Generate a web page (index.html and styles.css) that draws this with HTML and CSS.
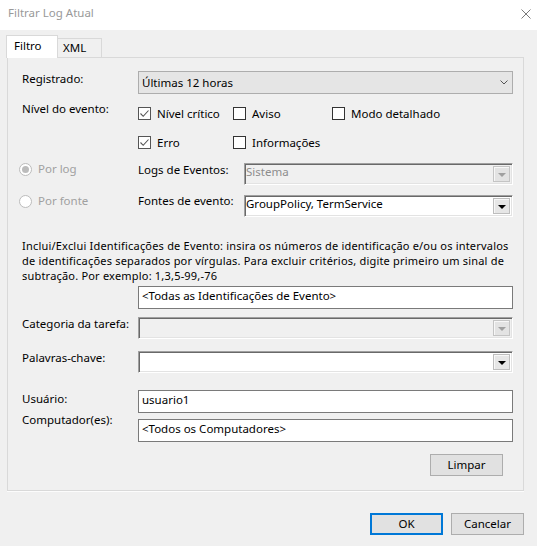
FILE: index.html
```html
<!DOCTYPE html>
<html lang="pt-BR">
<head>
<meta charset="utf-8">
<title>Filtrar Log Atual</title>
<link rel="stylesheet" href="styles.css">
</head>
<body>
<div class="titlebar">
  <span class="title">Filtrar Log Atual</span>
  <svg class="close" viewBox="0 0 10 10" width="10" height="10"><path d="M0.5 0.5L9.5 9.5M9.5 0.5L0.5 9.5" stroke="#7a7a7a" stroke-width="1" fill="none"/></svg>
</div>
<div class="tabs">
  <div class="tab active">Filtro</div>
  <div class="tab">XML</div>
</div>
<div class="panel">
  <div class="row row-reg">
    <div class="lbl">Registrado:</div>
    <div class="combo-themed">
      <span class="ctext">Últimas 12 horas</span>
      <svg class="chev" viewBox="0 0 8 5" width="8" height="5"><path d="M0.5 0.5L4 4L7.5 0.5" stroke="#555" stroke-width="1" fill="none"/></svg>
    </div>
  </div>

  <div class="row row-level">
    <div class="lbl lbl-level">Nível do evento:</div>
    <div class="checks">
      <div class="chk"><span class="box on"><svg viewBox="0 0 11 11" width="11" height="11"><path d="M1.5 5.5L4.2 8.3L9.5 2.5" stroke="#555" stroke-width="1.1" fill="none"/></svg></span>Nível crítico</div>
      <div class="chk"><span class="box"></span>Aviso</div>
      <div class="chk"><span class="box"></span>Modo detalhado</div>
      <div class="chk"><span class="box on"><svg viewBox="0 0 11 11" width="11" height="11"><path d="M1.5 5.5L4.2 8.3L9.5 2.5" stroke="#555" stroke-width="1.1" fill="none"/></svg></span>Erro</div>
      <div class="chk"><span class="box"></span>Informações</div>
    </div>
  </div>

  <div class="row row-logs">
    <div class="radio-col"><span class="radio on"></span>Por log</div>
    <div class="lbl2">Logs de Eventos:</div>
    <div class="combo3d disabled">
      <span class="ctext">Sistema</span>
      <span class="dropbtn"><span class="tri"></span></span>
    </div>
  </div>

  <div class="row row-src">
    <div class="radio-col"><span class="radio"></span>Por fonte</div>
    <div class="lbl2">Fontes de evento:</div>
    <div class="combo3d">
      <span class="ctext">GroupPolicy, TermService</span>
      <span class="dropbtn"><span class="tri"></span></span>
    </div>
  </div>

  <p class="para">Inclui/Exclui Identificações de Evento: insira os números de identificação e/ou os intervalos<br>de identificações separados por vírgulas. Para excluir critérios, digite primeiro um sinal de<br>subtração. Por exemplo: 1,3,5-99,-76</p>

  <div class="row row-ids">
    <div class="tb">&lt;Todas as Identificações de Evento&gt;</div>
  </div>

  <div class="row row-cat">
    <div class="lbl lbl-cat">Categoria da tarefa:</div>
    <div class="combo3d disabled">
      <span class="ctext"></span>
      <span class="dropbtn"><span class="tri"></span></span>
    </div>
  </div>

  <div class="row row-kw">
    <div class="lbl lbl-kw">Palavras-chave:</div>
    <div class="combo3d">
      <span class="ctext"></span>
      <span class="dropbtn"><span class="tri"></span></span>
    </div>
  </div>

  <div class="row row-user">
    <div class="lbl lbl-user">Usuário:</div>
    <div class="tb">usuario1</div>
  </div>

  <div class="row row-comp">
    <div class="lbl lbl-comp">Computador(es):</div>
    <div class="tb">&lt;Todos os Computadores&gt;</div>
  </div>

  <div class="row row-clear">
    <div class="btn">Limpar</div>
  </div>
</div>

<div class="footer">
  <div class="btn default">OK</div>
  <div class="btn">Cancelar</div>
</div>
</body>
</html>
```

FILE: styles.css
```css
* { box-sizing: border-box; }
html, body { margin: 0; padding: 0; }
body {
  width: 537px;
  height: 546px;
  overflow: hidden;
  background: #f0f0f0;
  font-family: "Noto Sans", "Open Sans", sans-serif;
  font-size: 11.5px;
  line-height: 16px;
  color: #000;
}

.titlebar {
  height: 30px;
  background: #fff;
  display: flex;
  justify-content: space-between;
  align-items: flex-start;
  padding: 5px 6px 0 8px;
}
.title { color: #999; }
.close { margin-top: 4px; display: block; }

.tabs {
  display: flex;
  align-items: flex-end;
  height: 22px;
  margin: 5px 0 0 6px;
  position: relative;
  z-index: 1;
}
.tab {
  height: 19px;
  border: 1px solid #d9d9d9;
  border-bottom: none;
  background: #f0f0f0;
  padding: 1px 0 0 5px;
  width: 45px;
  margin-left: -1px;
}
.tab.active {
  height: 23px;
  width: 52px;
  margin-left: 0;
  margin-bottom: -1px;
  background: #fff;
  padding: 2px 0 0 7px;
}

.panel {
  margin-left: 7px;
  width: 517px;
  height: 434px;
  border: 1px solid #d9d9d9;
  box-shadow: 0 1px 0 #fcfcfc;
  padding: 0 10px 0 14px;
  background: #f0f0f0;
}

.row { display: flex; align-items: flex-start; }
.lbl { width: 116px; flex: none; white-space: nowrap; }
.lbl2 { width: 106px; flex: none; white-space: nowrap; }

.row-reg { margin-top: 13px; }
.row-level { margin-top: 9px; }
.lbl-level { margin-top: -2px; }
.row-logs { margin-top: 10px; }
.row-logs .lbl2 { margin-top: -1.5px; }
.row-src { margin-top: 10px; }
.row-src .lbl2 { margin-top: -2.5px; }
.row-ids { margin-top: 3px; padding-left: 116px; }
.row-cat { margin-top: 8px; }
.lbl-cat { margin-top: -1.5px; }
.row-kw { margin-top: 12px; }
.lbl-kw { margin-top: -1.5px; }
.row-user { margin-top: 17px; }
.lbl-user { margin-top: 1px; }
.row-comp { margin-top: 6px; }
.lbl-comp { margin-top: -7px; }
.row-clear { margin-top: 12px; justify-content: flex-end; padding-right: 10px; }

.combo-themed {
  flex: 1;
  height: 23px;
  border: 1px solid #adadad;
  background: #e5e5e5;
  display: flex;
  align-items: center;
  justify-content: space-between;
  padding: 0 4px 0 3px;
}
.chev { display: block; }

.checks {
  display: grid;
  grid-template-columns: 95px 99px auto;
  grid-auto-rows: 21px;
  row-gap: 8px;
}
.chk { display: flex; align-items: center; white-space: nowrap; line-height: 15px; }
.box {
  width: 13px;
  height: 13px;
  border: 1px solid #333;
  background: #fff;
  margin-right: 6px;
  flex: none;
  display: flex;
}
.box.on { border-color: #555; }
.box svg { display: block; }

.radio-col {
  width: 119px;
  margin-left: -3px;
  flex: none;
  display: flex;
  align-items: center;
  color: #a0a0a0;
  margin-top: -2px;
}
.radio {
  width: 13px;
  height: 13px;
  border-radius: 50%;
  border: 1px solid #bcbcbc;
  background: #fff;
  margin-right: 6px;
  display: flex;
  align-items: center;
  justify-content: center;
  flex: none;
}
.radio.on::after {
  content: "";
  width: 7px;
  height: 7px;
  border-radius: 50%;
  background: #bcbcbc;
}

.combo3d {
  flex: 1;
  height: 22px;
  border: 1px solid;
  border-color: #a0a0a0 #fff #fff #a0a0a0;
  box-shadow: inset 1px 1px 0 #696969, inset -1px -1px 0 #e3e3e3;
  background: #fff;
  padding: 2px;
  display: flex;
  align-items: flex-start;
}
.combo3d.disabled { background: #f0f0f0; color: #8d8d8d; }
.combo3d .ctext {
  flex: 1;
  white-space: nowrap;
  margin: -2px 0 0 -1px;
  line-height: 16px;
}
.dropbtn {
  width: 17px;
  height: 16px;
  flex: none;
  background: #e6e6e6;
  border: 1px solid #bdbdbd;
  box-shadow: inset 1px 1px 0 #f7f7f7;
  display: flex;
  align-items: center;
  justify-content: center;
}
.tri {
  width: 0;
  height: 0;
  border-left: 4px solid transparent;
  border-right: 4px solid transparent;
  border-top: 4px solid #000;
  margin-top: 1px;
}
.disabled .tri { border-top-color: #a0a0a0; }
.disabled .dropbtn { background: #e3e3e3; border-color: #c4c4c4; }

.para {
  margin: 21px 0 0 0;
  font-size: 11px;
  letter-spacing: 0.2px;
  line-height: 15px;
  white-space: nowrap;
}

.tb {
  flex: 1;
  height: 23px;
  border: 1px solid #7a7a7a;
  background: #fff;
  padding: 0 3px;
  line-height: 18px;
  white-space: nowrap;
}

.btn {
  width: 73px;
  height: 22px;
  border: 1px solid #adadad;
  background: #e1e1e1;
  text-align: center;
  line-height: 20px;
}
.btn.default { border: 2px solid #0078d7; line-height: 18px; }

.footer {
  display: flex;
  justify-content: flex-end;
  gap: 8px;
  margin-top: 22px;
  padding-right: 13px;
}
```
